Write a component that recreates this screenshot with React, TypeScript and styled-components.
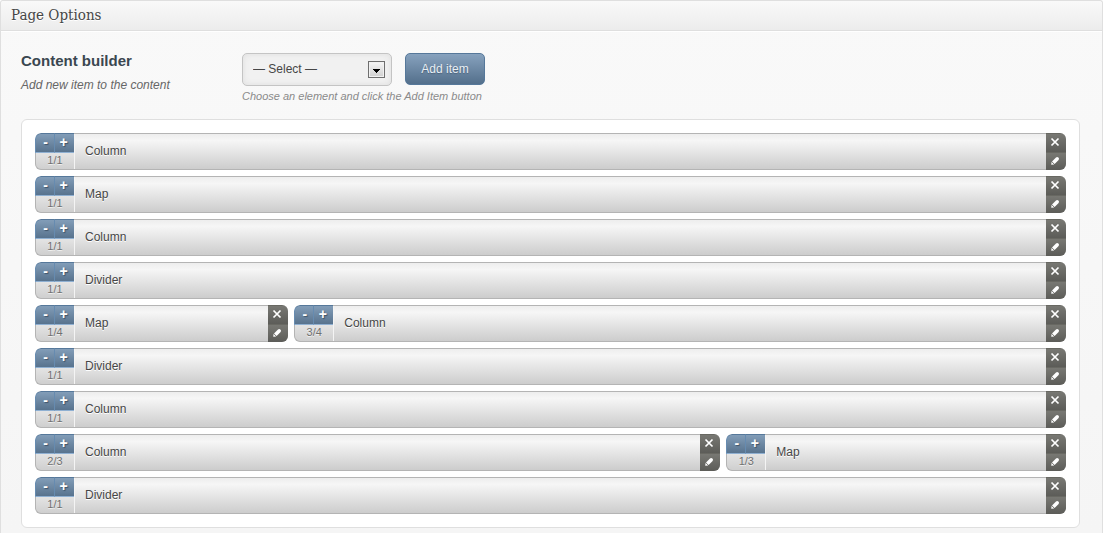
import React, { useState } from "react";
import styled, { createGlobalStyle } from "styled-components";

const GlobalStyle = createGlobalStyle`
  *, *::before, *::after { box-sizing: border-box; }
  body {
    margin: 0;
    background: #fff;
    color: #444;
    font: 12px/16px Arial, "Liberation Sans", sans-serif;
  }
  button, select { font: inherit; margin: 0; }
`;

const Panel = styled.section`
  min-height: 100vh;
  border: 1px solid #dfdfdf;
  border-bottom: 0;
  border-radius: 3px 3px 0 0;
  background: linear-gradient(#f9f9f9, #f5f5f5);
`;

const PanelHeader = styled.header`
  padding: 4px 10px 5px;
  border-bottom: 1px solid #dfdfdf;
  border-radius: 3px 3px 0 0;
  background: linear-gradient(#f9f9f9, #ececec);
  box-shadow: 0 1px 0 #fff;
`;

const PanelTitle = styled.h2`
  margin: 0;
  font: 15px/20px "DejaVu Serif Condensed", "DejaVu Serif", serif;
  color: #464646;
  text-shadow: 0 1px 0 #fff;
`;

const PanelBody = styled.div`
  padding: 22px 22px 5px 20px;
`;

const Field = styled.div`
  display: grid;
  grid-template-columns: 208px 1fr;
  column-gap: 13px;
  margin-bottom: 15px;
`;

const FieldLabel = styled.label`
  display: block;
  margin-bottom: 8px;
  font-size: 15px;
  font-weight: bold;
  line-height: 16px;
  color: #3a4750;
`;

const FieldNote = styled.p`
  margin: 0;
  font-style: italic;
  color: #666;
`;

const Controls = styled.div`
  display: flex;
  align-items: flex-start;
  gap: 13px;
`;

const SelectBox = styled.div`
  position: relative;
  width: 150px;
`;

const Select = styled.select`
  display: block;
  width: 100%;
  height: 33px;
  padding: 0 30px 1px 10px;
  appearance: none;
  border: 1px solid #c4c4c4;
  border-radius: 5px;
  background: #f1f1f1;
  box-shadow: inset 0 0 6px #dedede;
  color: #464646;
`;

const SelectArrow = styled.span`
  position: absolute;
  top: 8px;
  right: 7px;
  width: 17px;
  height: 17px;
  padding: 1px;
  border: 1px solid #6f6f6f;
  background: linear-gradient(#f4f4f4, #d2d2d2) content-box #fff;
  pointer-events: none;

  svg { display: block; }
`;

const AddButton = styled.button`
  width: 80px;
  height: 32px;
  padding: 0;
  border: 1px solid #56789a;
  border-radius: 5px;
  background: linear-gradient(#87a2be, #536f8b);
  color: #e8eef4;
  text-shadow: 0 1px 1px #4c637b;
`;

const Hint = styled.p`
  margin: 2px 0 0;
  font-size: 11px;
  font-style: italic;
  color: #8a8a8a;
`;

const Builder = styled.div`
  display: grid;
  grid-template-columns: repeat(12, 1fr);
  gap: 6px;
  padding: 13px;
  border: 1px solid #dfdfdf;
  border-radius: 6px;
  background: #fff;
`;

const Item = styled.div<{ $span: number }>`
  grid-column: span ${(p) => p.$span};
  display: flex;
  height: 37px;
  overflow: hidden;
  border-radius: 6px;
  background: linear-gradient(#ececec, #f6f6f6 20%, #cbcbcb);
`;

const SizePane = styled.div`
  display: flex;
  flex-direction: column;
  width: 39px;
`;

const Stepper = styled.div`
  display: flex;
  height: 20px;
`;

const StepButton = styled.button`
  flex: 1;
  padding: 0 0 2px 1px;
  border: solid #668bb0;
  border-width: 1px 0 1px 1px;
  border-top-color: #56789a;
  border-bottom-color: #8fb0d2;
  background: linear-gradient(#829db8, #58738e);
  color: #fff;
  font-size: 14px;
  font-weight: bold;
  line-height: 16px;
  text-shadow: 1px 1px 1px #405468;

  &:first-child { border-top-left-radius: 6px; }
  &:last-child { padding: 0 2px 2px 0; }
`;

const Fraction = styled.span`
  flex: 1;
  border: solid #b4b4b4;
  border-width: 0 0 1px 1px;
  border-bottom-left-radius: 6px;
  background: linear-gradient(#e4e4e4, #cfcfcf);
  font-size: 11px;
  line-height: 15px;
  text-align: center;
  color: #707070;
  text-shadow: 0 1px 0 #f0f0f0;
`;

const ItemName = styled.span`
  flex: 1;
  padding-left: 11px;
  border: solid #b4b4b4;
  border-width: 1px 0;
  box-shadow: inset 1px 0 0 #f4f4f4;
  line-height: 34px;
  color: #464646;
  text-shadow: 0 1px 0 #fff;
`;

const Actions = styled.div`
  display: flex;
  flex-direction: column;
  width: 20px;
`;

const ActionButton = styled.button`
  flex: 1;
  display: flex;
  align-items: center;
  justify-content: center;
  padding: 0 2px 1px 0;
  border: 0;
  border-top: 1px solid #686862;
  background: linear-gradient(#787873, #5c5c58);

  svg { display: block; }
`;

const CloseIcon = () => (
  <svg width="10" height="10" viewBox="0 0 10 10" aria-hidden="true">
    <path d="M1.5 1.5 8.5 8.5M8.5 1.5 1.5 8.5" stroke="#fff" strokeWidth="1.7" />
  </svg>
);

const PencilIcon = () => (
  <svg width="10" height="10" viewBox="0 0 10 10" aria-hidden="true">
    <path d="M1.2 8.8 1.6 5.8 4.2 8.4Z" fill="#fff" />
    <path d="M2 5.4 6 1.4Q7.3.4 8.4 1.6 9.6 2.7 8.6 4L4.6 8Z" fill="#fff" />
    <path d="M2.2 6.2 3.8 7.8" stroke="#6a6a65" strokeWidth="0.5" />
  </svg>
);

type Entry = { name: string; size: string; span: number };

const entries: Entry[] = [
  { name: "Column", size: "1/1", span: 12 },
  { name: "Map", size: "1/1", span: 12 },
  { name: "Column", size: "1/1", span: 12 },
  { name: "Divider", size: "1/1", span: 12 },
  { name: "Map", size: "1/4", span: 3 },
  { name: "Column", size: "3/4", span: 9 },
  { name: "Divider", size: "1/1", span: 12 },
  { name: "Column", size: "1/1", span: 12 },
  { name: "Column", size: "2/3", span: 8 },
  { name: "Map", size: "1/3", span: 4 },
  { name: "Divider", size: "1/1", span: 12 },
];

const BuilderItem = ({ name, size, span }: Entry) => (
  <Item $span={span}>
    <SizePane>
      <Stepper>
        <StepButton type="button" aria-label="Narrower">-</StepButton>
        <StepButton type="button" aria-label="Wider">+</StepButton>
      </Stepper>
      <Fraction>{size}</Fraction>
    </SizePane>
    <ItemName>{name}</ItemName>
    <Actions>
      <ActionButton type="button" aria-label="Remove"><CloseIcon /></ActionButton>
      <ActionButton type="button" aria-label="Edit"><PencilIcon /></ActionButton>
    </Actions>
  </Item>
);

export default function App() {
  const [choice, setChoice] = useState("");
  return (
    <>
      <GlobalStyle />
      <Panel>
        <PanelHeader>
          <PanelTitle>Page Options</PanelTitle>
        </PanelHeader>
        <PanelBody>
          <Field>
            <div>
              <FieldLabel htmlFor="element">Content builder</FieldLabel>
              <FieldNote>Add new item to the content</FieldNote>
            </div>
            <div>
              <Controls>
                <SelectBox>
                  <Select id="element" value={choice} onChange={(e) => setChoice(e.target.value)}>
                    <option value="">— Select —</option>
                    <option>Column</option>
                    <option>Divider</option>
                    <option>Map</option>
                  </Select>
                  <SelectArrow>
                    <svg width="13" height="13" viewBox="0 0 13 13" aria-hidden="true">
                      <path d="M3 6h7v1H9v1H8v1H7v1H6V9H5V8H4V7H3z" fill="#000" />
                    </svg>
                  </SelectArrow>
                </SelectBox>
                <AddButton type="button">Add item</AddButton>
              </Controls>
              <Hint>Choose an element and click the Add Item button</Hint>
            </div>
          </Field>
          <Builder>
            {entries.map((entry, i) => (
              <BuilderItem key={i} {...entry} />
            ))}
          </Builder>
        </PanelBody>
      </Panel>
    </>
  );
}
